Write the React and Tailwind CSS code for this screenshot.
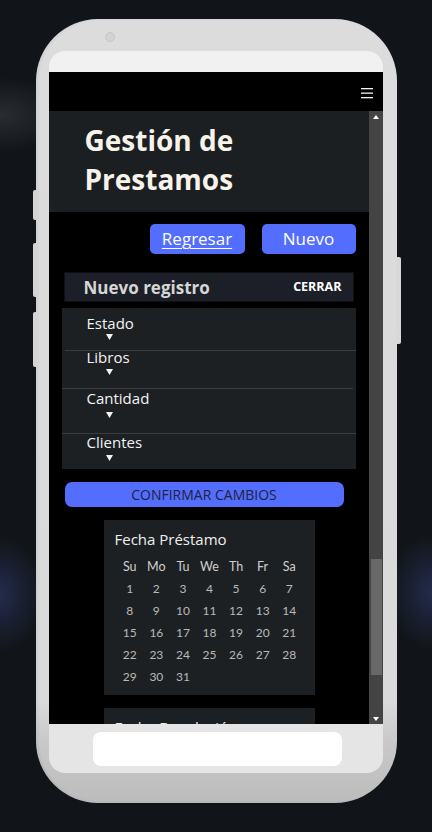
import React from 'react';

const fields = [
  { label: 'Estado', h: 'h-[42px]', pt: 'pt-[9px]', mt: 'mt-[5px]' },
  { label: 'Libros', h: 'h-[37px]', pt: 'pt-0', mt: 'mt-[6px]' },
  { label: 'Cantidad', h: 'h-[44px]', pt: 'pt-[3px]', mt: 'mt-[8px]' },
  { label: 'Clientes', h: 'h-[35px]', pt: 'pt-[2px]', mt: 'mt-[7px]' },
];

const separators = ['ml-[3px]', 'mr-[3px]', ''];

const days = ['Su', 'Mo', 'Tu', 'We', 'Th', 'Fr', 'Sa'];
const dates = Array.from({ length: 31 }, (_, i) => i + 1);

function Arrow() {
  return (
    <svg width="7" height="6" viewBox="0 0 7 6" className="block">
      <polygon points="0,0 7,0 3.5,6" fill="#f2f2f2" />
    </svg>
  );
}

function Calendar({ title }) {
  return (
    <div className="ml-[55px] w-[211px] bg-[#1d2023] px-[11px] pt-[9px] pb-[7px]">
      <p className="text-[15px] leading-[20px] text-[#efefef] font-['Open_Sans',sans-serif]">{title}</p>
      <div className="mt-[7px] ml-[2px] grid w-[186px] grid-cols-7 font-['Lato',sans-serif]">
        {days.map((d) => (
          <span key={d} className="h-[22px] text-center text-[12.5px] leading-[22px] text-[#cfcfcf]">{d}</span>
        ))}
        {dates.map((n) => (
          <span key={n} className="h-[22px] text-center text-[12px] leading-[22px] text-[#b9b9b9]">{n}</span>
        ))}
      </div>
    </div>
  );
}

export default function App() {
  return (
    <div className="flex min-h-[832px] w-full justify-center bg-[#111519] bg-[radial-gradient(44px_58px_at_0px_594px,#232b4c,transparent),radial-gradient(44px_58px_at_432px_592px,#232b4c,transparent),radial-gradient(70px_38px_at_0px_115px,#292d32,transparent)] pt-[19px]">
      {/* phone body */}
      <div className="relative h-[784px] w-[361px] rounded-[62px] bg-[linear-gradient(to_bottom,#dcdcdc_0%,#dadada_87%,#c9c9c9_92%,#bcbcbc_100%)] pl-[13px] pr-[14px] pt-[32px] shadow-[inset_2px_0_3px_rgba(0,0,0,0.06)]">
        {/* side buttons */}
        <div className="absolute left-[-3px] top-[171px] h-[30px] w-[4px] rounded-l-[2px] bg-[#d4d4d4]" />
        <div className="absolute left-[-3px] top-[224px] h-[54px] w-[4px] rounded-l-[2px] bg-[#d4d4d4]" />
        <div className="absolute left-[-3px] top-[293px] h-[55px] w-[4px] rounded-l-[2px] bg-[#d4d4d4]" />
        <div className="absolute right-[-4px] top-[238px] h-[87px] w-[5px] rounded-r-[2px] bg-[#d8d8d8]" />
        {/* camera */}
        <div className="absolute left-[69px] top-[13px] h-[10px] w-[10px] rounded-full border border-[#c6c6c6] bg-[#d3d3d3]" />

        <div className="flex h-[722px] flex-col overflow-hidden rounded-[16px]">
          <div className="h-[21px] bg-[#f1f1f1]" />

          {/* screen */}
          <div className="flex h-[652px] flex-col bg-black">
            <div className="flex h-[39px] items-center justify-end pr-[10px]">
              <svg width="12" height="12" viewBox="0 0 12 12" className="mt-[2px]">
                <rect x="0" y="1" width="12" height="1.3" fill="#f2f2f2" />
                <rect x="0" y="5.5" width="12" height="1.3" fill="#f2f2f2" />
                <rect x="0" y="10" width="12" height="1.3" fill="#f2f2f2" />
              </svg>
            </div>

            <div className="flex h-[613px]">
              {/* content */}
              <div className="w-[320px] overflow-hidden bg-black font-['Open_Sans',sans-serif]">
                <div className="h-[101px] bg-[#1c1f22] pl-[36px] pt-[10px]">
                  <h1 className="text-[28px] font-bold leading-[39px] text-[#f7f3ea]">
                    Gestión de
                    <br />
                    Prestamos
                  </h1>
                </div>

                <div className="mt-[12px] flex justify-end gap-[17px] pr-[13px]">
                  <button className="h-[30px] w-[95px] rounded-[5px] bg-[#536dfe] text-[17px] text-white underline underline-offset-[3px]">
                    Regresar
                  </button>
                  <button className="h-[30px] w-[94px] rounded-[5px] bg-[#536dfe] text-[17px] text-white">Nuevo</button>
                </div>

                <div className="ml-[15px] mt-[18px] flex h-[30px] w-[290px] items-center justify-between border border-[#0e0f12] bg-[#1c1f27] pl-[19px] pr-[11px]">
                  <span className="mt-[2px] text-[17px] font-bold text-[#d6d6d6]">Nuevo registro</span>
                  <span className="text-[12.5px] font-bold text-white">CERRAR</span>
                </div>

                <div className="ml-[13px] mt-[6px] w-[294px] bg-[#1d2023]">
                  {fields.map((f, i) => (
                    <React.Fragment key={f.label}>
                      <div className={`${f.h} ${f.pt} pl-[25px]`}>
                        <p className="text-[15px] leading-[12px] text-[#f3f3f3]">{f.label}</p>
                        <div className={`${f.mt} ml-[19px]`}>
                          <Arrow />
                        </div>
                      </div>
                      {i < 3 && <div className={`h-px bg-[#3a3d41] ${separators[i]}`} />}
                    </React.Fragment>
                  ))}
                </div>

                <button className="ml-[16px] mt-[13px] h-[25px] w-[279px] rounded-[7px] bg-[#536dfe] text-[14px] leading-[25px] text-[#1f2238]">
                  CONFIRMAR CAMBIOS
                </button>

                <div className="mt-[13px]">
                  <Calendar title="Fecha Préstamo" />
                </div>
                <div className="mt-[13px]">
                  <Calendar title="Fecha Devolución" />
                </div>
              </div>

              {/* scrollbar */}
              <div className="flex w-[14px] flex-col bg-[#444444]">
                <div className="flex h-[17px] items-center justify-center">
                  <svg width="6" height="4" viewBox="0 0 6 4" className="-mt-[6px]">
                    <polygon points="0,4 6,4 3,0" fill="#ffffff" />
                  </svg>
                </div>
                <div className="ml-[2px] mt-[431px] h-[116px] w-[11px] bg-[#686868]" />
                <div className="flex-1" />
                <div className="flex h-[17px] items-center justify-center">
                  <svg width="6" height="4" viewBox="0 0 6 4" className="mt-[6px]">
                    <polygon points="0,0 6,0 3,4" fill="#ffffff" />
                  </svg>
                </div>
              </div>
            </div>
          </div>

          <div className="h-[49px] bg-[#e5e5e5] pl-[44px] pr-[41px] pt-[8px]">
            <div className="h-[34px] rounded-[8px] bg-white" />
          </div>
        </div>
      </div>
    </div>
  );
}
